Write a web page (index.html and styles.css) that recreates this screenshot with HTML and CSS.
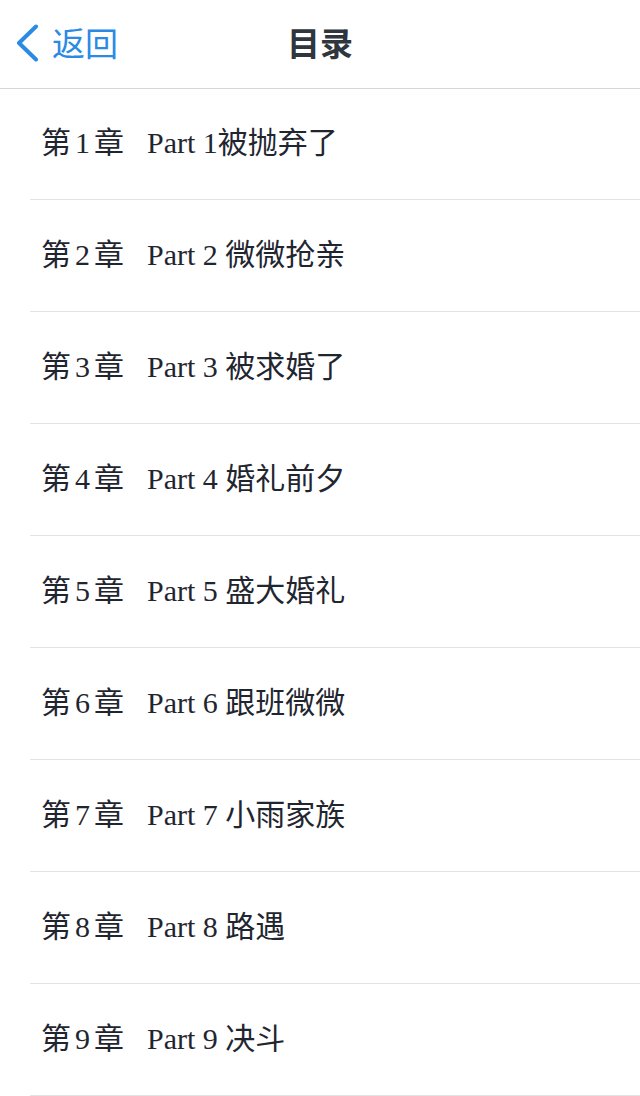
FILE: index.html
```html
<!DOCTYPE html>
<html lang="zh">
<head>
<meta charset="utf-8">
<title>目录</title>
<link rel="stylesheet" href="styles.css">
</head>
<body>
<header class="navbar">
  <a class="back" href="#">
    <svg class="chev" width="24" height="38" viewBox="0 0 24 38"><path d="M21 2.5 L4 19 L21 35.5" fill="none" stroke="currentColor" stroke-width="4" stroke-linecap="round" stroke-linejoin="round"/></svg>
    <span class="back-text">返回</span>
  </a>
  <h1 class="title">目录</h1>
  <span class="spacer"></span>
</header>
<ul class="toc">
  <li class="item"><span class="chap">第<span class="num">1</span>章</span><span class="name">Part 1被抛弃了</span></li>
  <li class="item"><span class="chap">第<span class="num">2</span>章</span><span class="name">Part 2 微微抢亲</span></li>
  <li class="item"><span class="chap">第<span class="num">3</span>章</span><span class="name">Part 3 被求婚了</span></li>
  <li class="item"><span class="chap">第<span class="num">4</span>章</span><span class="name">Part 4 婚礼前夕</span></li>
  <li class="item"><span class="chap">第<span class="num">5</span>章</span><span class="name">Part 5 盛大婚礼</span></li>
  <li class="item"><span class="chap">第<span class="num">6</span>章</span><span class="name">Part 6 跟班微微</span></li>
  <li class="item"><span class="chap">第<span class="num">7</span>章</span><span class="name">Part 7 小雨家族</span></li>
  <li class="item"><span class="chap">第<span class="num">8</span>章</span><span class="name">Part 8 路遇</span></li>
  <li class="item"><span class="chap">第<span class="num">9</span>章</span><span class="name">Part 9 决斗</span></li>
</ul>
</body>
</html>
```
FILE: styles.css
```css
html, body {
  margin: 0;
  padding: 0;
  background: #ffffff;
}
body {
  font-family: "Liberation Serif", "Noto Sans CJK SC", serif;
  color: #1f2630;
}
.navbar {
  height: 85px;
  padding-bottom: 3px;
  border-bottom: 1px solid #d6d6d6;
  display: grid;
  grid-template-columns: 1fr auto 1fr;
  align-items: center;
}
.back {
  display: flex;
  align-items: center;
  gap: 13px;
  padding-left: 15px;
  color: #2a8ae4;
  text-decoration: none;
  font-family: "Noto Sans CJK SC", sans-serif;
  font-size: 33px;
  line-height: 1;
}
.chev {
  display: block;
}
.title {
  margin: 0;
  font-family: "Noto Sans CJK SC", sans-serif;
  font-size: 33px;
  font-weight: 700;
  color: #30363d;
  line-height: 1;
}
.toc {
  list-style: none;
  margin: 0;
  padding: 0;
}
.item {
  margin-left: 30px;
  padding-left: 11px;
  padding-bottom: 8px;
  height: 103px;
  border-bottom: 1px solid #e3e3e3;
  display: flex;
  align-items: center;
  font-size: 30px;
  white-space: pre;
}
.item:first-child {
  height: 102px;
}
.num {
  margin: 0 4px;
}
.chap {
  margin-right: 23px;
}
```
